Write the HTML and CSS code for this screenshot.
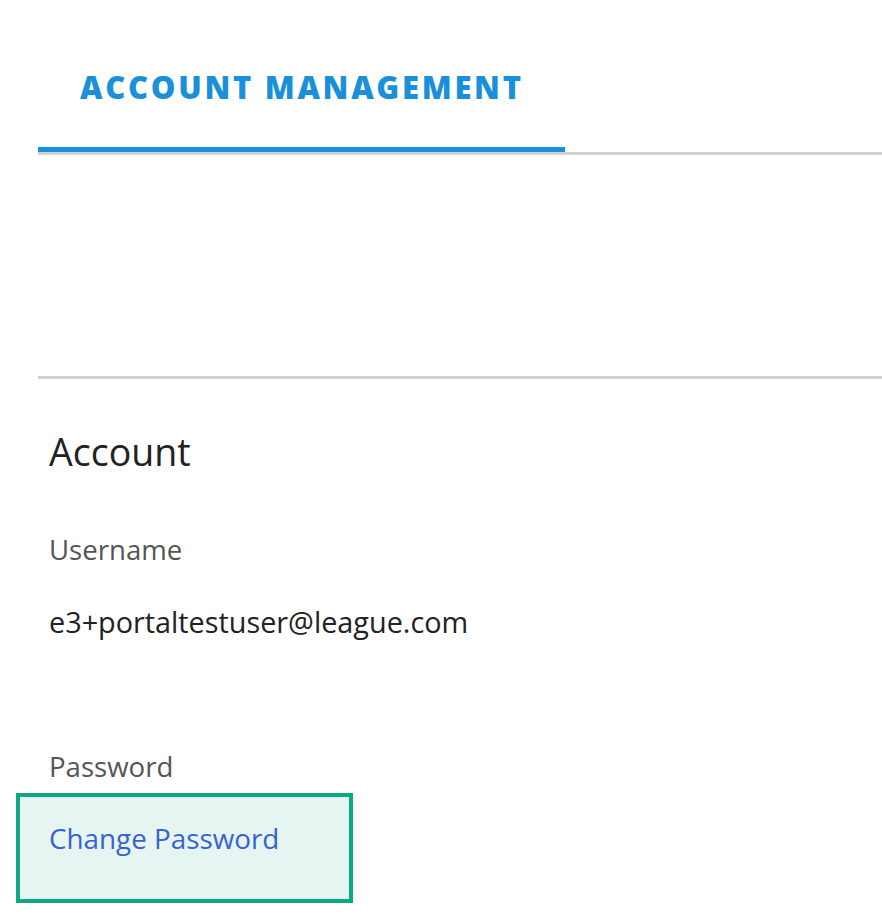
FILE: index.html
```html
<!DOCTYPE html>
<html lang="en">
<head>
<meta charset="utf-8">
<title>Account Management</title>
<link rel="stylesheet" href="styles.css">
</head>
<body>
<div class="page">
  <nav class="tabs">
    <div class="tab tab-active">ACCOUNT MANAGEMENT</div>
  </nav>
  <div class="divider"></div>
  <section class="account">
    <h2 class="account-title">Account</h2>
    <div class="field">
      <div class="field-label">Username</div>
      <div class="field-value">e3+portaltestuser@league.com</div>
    </div>
    <div class="field field-password">
      <div class="field-label">Password</div>
      <div class="focus-box"><a class="link" href="#">Change Password</a></div>
    </div>
  </section>
</div>
</body>
</html>
```
FILE: styles.css
```css
html, body {
  margin: 0;
  padding: 0;
  background: #ffffff;
}
body {
  font-family: "Open Sans", "Noto Sans", sans-serif;
}
.page {
  padding-left: 38px;
}
.tabs {
  display: flex;
  border-bottom: 3px solid #d2d2d2;
}
.tab {
  width: 485px;
  padding: 67px 0 40px 42px;
  font-size: 31px;
  line-height: 40px;
  font-weight: 800;
  letter-spacing: 2.7px;
  color: #1a90d9;
  white-space: nowrap;
}
.tab-active {
  border-bottom: 5px solid #1a90d9;
}
.divider {
  margin-top: 221px;
  border-top: 3px solid #d2d2d2;
}
.account {
  padding-left: 11px;
}
.account-title {
  margin: 49px 0 0;
  font-size: 37.5px;
  line-height: 48px;
  font-weight: 400;
  color: #222222;
}
.field {
  display: flex;
  flex-direction: column;
}
.field-label {
  margin-top: 55px;
  font-size: 27.6px;
  line-height: 36px;
  color: #555555;
}
.field-value {
  margin-top: 36px;
  font-size: 28.8px;
  line-height: 38px;
  color: #222222;
}
.field-password .field-label {
  margin-top: 107px;
}
.focus-box {
  margin: 9px 0 0 -33px;
  width: 300px;
  padding: 23px 0 43px 29px;
  border: 4px solid #0ba886;
  background: #e6f5f2;
}
.link {
  display: block;
  font-size: 27.8px;
  line-height: 36px;
  color: #3563d3;
  text-decoration: none;
}
```
